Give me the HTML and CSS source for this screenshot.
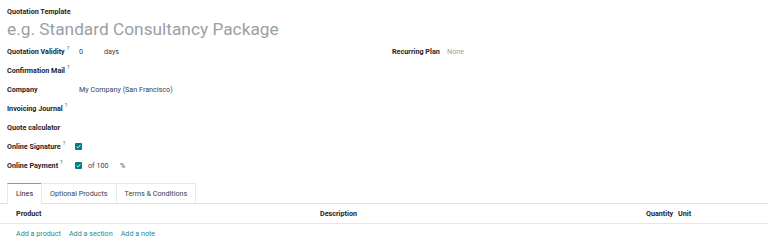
FILE: index.html
```html
<!DOCTYPE html>
<html>
<head>
<meta charset="utf-8">
<link rel="stylesheet" href="styles.css">
</head>
<body>
<div class="sheet">
  <div class="title-block">
    <div class="title-label">Quotation Template</div>
    <div class="title-input">e.g. Standard Consultancy Package</div>
  </div>
  <div class="groups">
    <div class="group left">
      <div class="row"><span class="label">Quotation Validity<sup>?</sup></span><span class="value"><span class="num">0</span><span class="unit">days</span></span></div>
      <div class="row"><span class="label">Confirmation Mail<sup>?</sup></span><span class="value"></span></div>
      <div class="row"><span class="label">Company</span><span class="value">My Company (San Francisco)</span></div>
      <div class="row"><span class="label">Invoicing Journal<sup>?</sup></span><span class="value"></span></div>
      <div class="row"><span class="label">Quote calculator</span><span class="value"></span></div>
      <div class="row"><span class="label">Online Signature<sup>?</sup></span><span class="value"><span class="check"><svg viewBox="0 0 8 8" width="7" height="7"><path d="M2 4.2 L3.3 5.5 L6 2.6" fill="none" stroke="#fff" stroke-width="1.1"/></svg></span></span></div>
      <div class="row"><span class="label">Online Payment<sup>?</sup></span><span class="value"><span class="check"><svg viewBox="0 0 8 8" width="7" height="7"><path d="M2 4.2 L3.3 5.5 L6 2.6" fill="none" stroke="#fff" stroke-width="1.1"/></svg></span><span class="of">of 100</span><span class="pct">%</span></span></div>
    </div>
    <div class="group right">
      <div class="row"><span class="label label-r">Recurring Plan</span><span class="value muted">None</span></div>
    </div>
  </div>
  <div class="tabs">
    <div class="tab active">Lines</div>
    <div class="tab">Optional Products</div>
    <div class="tab">Terms &amp; Conditions</div>
  </div>
  <div class="table">
    <div class="thead">
      <span class="th product">Product</span>
      <span class="th desc">Description</span>
      <span class="th qty">Quantity</span>
      <span class="th unitc">Unit</span>
    </div>
    <div class="addrow">
      <a class="link">Add a product</a>
      <a class="link">Add a section</a>
      <a class="link">Add a note</a>
    </div>
  </div>
</div>
</body>
</html>
```
FILE: styles.css
```css
html, body {
  margin: 0;
  padding: 0;
  background: #fff;
}
body {
  font-family: Roboto, "Noto Sans", sans-serif;
  font-size: 7.2px;
  color: #374151;
}
.sheet {
  padding: 6px 0 0 0;
}
.title-block {
  padding-left: 7px;
}
.title-label {
  height: 12px;
  line-height: 12px;
  font-weight: 700;
  color: #1f2328;
}
.title-input {
  height: 24px;
  line-height: 22px;
  font-size: 17.3px;
  color: #9aa0a6;
}
.groups {
  display: flex;
  padding-left: 7px;
}
.group.left {
  width: 385px;
}
.row {
  display: flex;
  align-items: center;
  height: 19px;
}
.label {
  width: 72px;
  font-weight: 700;
  color: #1f2328;
  white-space: nowrap;
}
.label-r {
  width: 55px;
}
sup {
  font-size: 5px;
  color: #3f9fa4;
  margin-left: 2px;
  font-weight: 700;
  vertical-align: 4px;
  line-height: 0;
}
.value {
  display: flex;
  align-items: center;
  color: #374151;
}
.num {
  width: 25px;
}
.muted {
  color: #9aa0a6;
}
.check {
  display: inline-flex;
  align-items: center;
  justify-content: center;
  width: 7px;
  height: 7px;
  margin-left: -4px;
  background: #017e84;
  border-radius: 1px;
}
.of {
  margin-left: 6px;
  width: 32px;
}
.pct {
  color: #4b5563;
}
.tabs {
  display: flex;
  margin-top: 8px;
  padding-left: 7px;
  border-bottom: 1px solid #dee2e6;
}
.tab {
  height: 19px;
  line-height: 19px;
  padding: 0 8px;
  border: 1px solid #e5e7eb;
  border-bottom: none;
  margin-right: -1px;
  color: #374151;
  background: #fff;
}
.tab.active {
  border-top: 1px solid #a78ba0;
  color: #1f2328;
  height: 20px;
  margin-bottom: -1px;
}
.thead {
  display: flex;
  align-items: center;
  height: 19px;
  border-bottom: 1px solid #e5e7eb;
  font-weight: 700;
  color: #1f2328;
}
.th.product {
  padding-left: 16px;
  width: 304px;
}
.th.desc {
  width: 326px;
}
.th.qty {
  width: 32px;
}
.addrow {
  display: flex;
  align-items: center;
  gap: 8px;
  height: 19px;
  padding-left: 16px;
  border-bottom: 1px solid #e5e7eb;
}
.link {
  color: #258a8f;
}
```
